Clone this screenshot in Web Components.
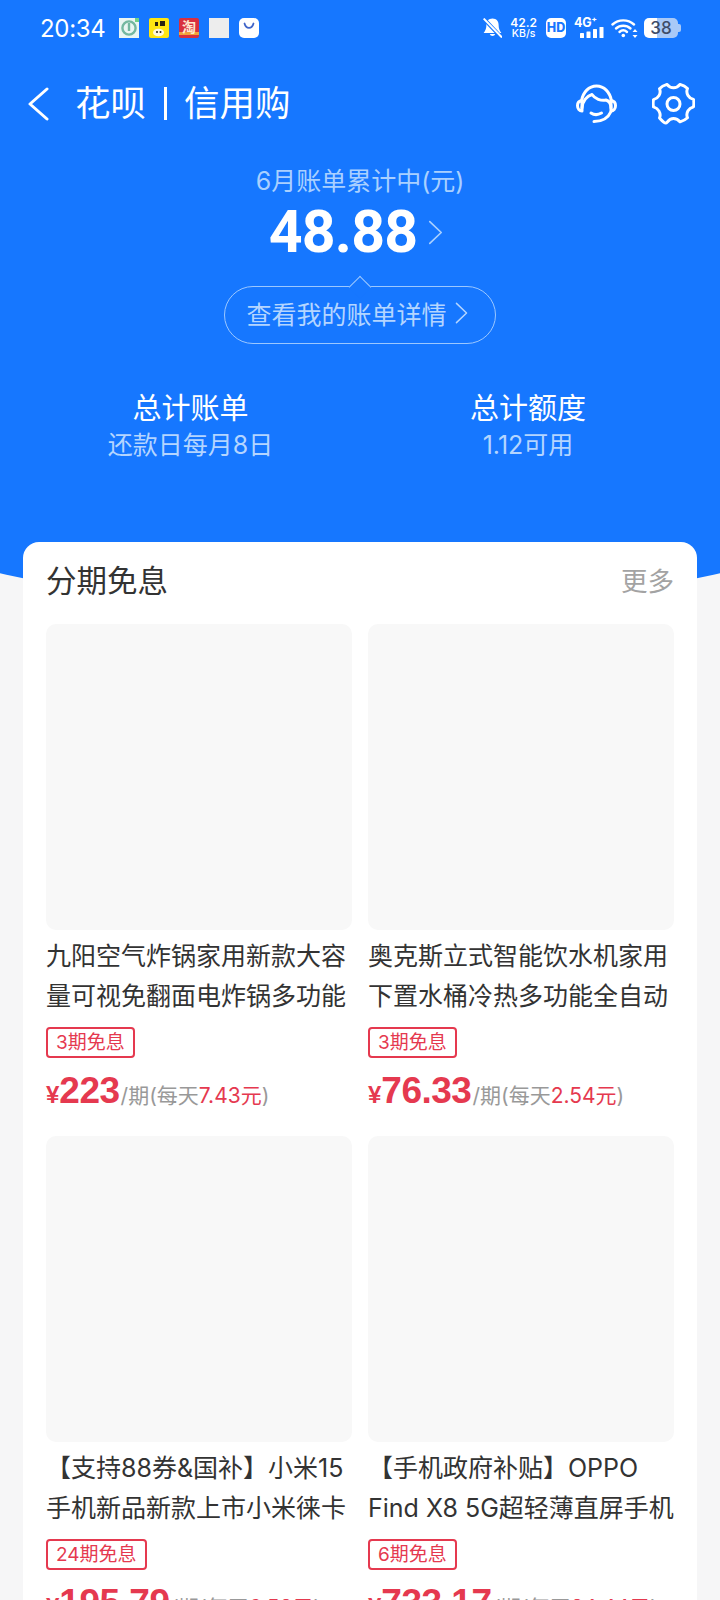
<!DOCTYPE html>
<html lang="zh">
<head>
<meta charset="utf-8">
<title>花呗 | 信用购</title>
<style>
  html, body {
    margin: 0;
    height: 1600px;
    overflow: hidden;
    background: #f6f6f7;
    font-family: Inter, "Noto Sans CJK SC", sans-serif;
  }
</style>
</head>
<body>
<credit-page>
  <bill-hero slot="hero" month="6月账单累计中(元)" amount="48.88">
    <stat-item slot="stats" title="总计账单" note="还款日每月8日"></stat-item>
    <stat-item slot="stats" title="总计额度" note="1.12可用"></stat-item>
  </bill-hero>
  <section-card title="分期免息" more="更多">
    <product-card tag="3期免息" price="223" daily="7.43">九阳空气炸锅家用新款大容量可视免翻面电炸锅多功能</product-card>
    <product-card tag="3期免息" price="76.33" daily="2.54">奥克斯立式智能饮水机家用下置水桶冷热多功能全自动</product-card>
    <product-card tag="24期免息" price="195.79" daily="6.53">【支持88券&amp;国补】小米15手机新品新款上市小米徕卡</product-card>
    <product-card tag="6期免息" price="733.17" daily="24.44">【手机政府补贴】OPPO Find X8 5G超轻薄直屏手机</product-card>
  </section-card>
</credit-page>
<home-indicator></home-indicator>

<script>
const CHEVRON = /* html */ `<svg viewBox="0 0 14 24" fill="none" stroke="currentColor" stroke-width="1.6" stroke-linecap="round" stroke-linejoin="round"><path d="M1.5 1.5 12.5 12 1.5 22.5"/></svg>`;

class statusBar extends HTMLElement {
  connectedCallback() {
    this.attachShadow({ mode: "open" }).innerHTML = /* html */ `
      <style>
        :host { display: flex; align-items: center; height: 56px; padding: 0 42px 0 40px; color: #fff; }
        .time { font-size: 24px; letter-spacing: -0.3px; width: 79px; }
        .apps { display: flex; gap: 10px; }
        .apps svg { width: 20px; height: 20px; display: block; }
        .sys { margin-left: auto; display: flex; align-items: center; }
        .speed { font-size: 12px; line-height: 11px; font-weight: 600; text-align: center; margin: 0 9px 0 8px; }
        .speed small { display: block; font-size: 10.5px; font-weight: 500; }
        .hd { width: 20px; height: 20px; background: #fff; border-radius: 5px; color: #1677ff; font-size: 12.5px; font-weight: 800; line-height: 20px; text-align: center; }
        .net { position: relative; width: 30px; height: 20px; margin: 0 7px 0 8px; }
        .net span { position: absolute; left: 0; top: -2px; font-size: 12.5px; font-weight: 700; line-height: 14px; letter-spacing: -0.3px; }
        .net svg { position: absolute; right: 0; bottom: 0; }
        .battery { position: relative; width: 34px; height: 20px; margin-left: 6px; border-radius: 5px; background: linear-gradient(90deg, #fff 0 38%, #a9c9f7 38%); color: #3e4c68; font-size: 17px; font-weight: 500; line-height: 21px; text-align: center; }
        .battery::after { content: ""; position: absolute; right: -2.5px; top: 6px; width: 2.5px; height: 8px; border-radius: 0 2px 2px 0; background: #a9c9f7; }
      </style>
      <span class="time">20:34</span>
      <div class="apps">
        <svg viewBox="0 0 20 20"><rect width="20" height="20" fill="#eaf6f2"/><circle cx="10" cy="10" r="6.6" fill="none" stroke="#74b8a0" stroke-width="2.4"/><path d="M10 5v8" stroke="#74b8a0" stroke-width="2.4"/><rect x="16" y="0" width="4" height="4" fill="#6fd08a"/></svg>
        <svg viewBox="0 0 20 20"><rect width="20" height="20" rx="2" fill="#ffe612"/><path d="M6 4h3v4H6zM11 3h5v5h-5z" fill="#2b2410"/><ellipse cx="9.500" cy="14.500" rx="5.500" ry="3.800" fill="#fff8dc"/><circle cx="8" cy="14" r="1" fill="#2b2410"/><circle cx="11.500" cy="14" r="1" fill="#2b2410"/></svg>
        <svg viewBox="0 0 20 20"><rect width="20" height="20" rx="2" fill="#d8303f"/><rect y="14" width="20" height="3" fill="#f1a23c"/><text x="10" y="14" font-size="14" font-weight="700" text-anchor="middle" fill="#ffe9cf" font-family="Noto Sans CJK SC, sans-serif">淘</text></svg>
        <svg viewBox="0 0 20 20"><rect width="20" height="20" fill="#ededed"/></svg>
        <svg viewBox="0 0 20 20"><rect width="20" height="20" rx="5" fill="#fff"/><path d="M5.500 5.500c.8 3 2.500 4.300 4.500 4.300s3.700-1.300 4.500-4.300" fill="none" stroke="#3f64c8" stroke-width="1.800" stroke-linecap="round"/></svg>
      </div>
      <div class="sys">
        <svg width="19" height="20" viewBox="1 1 17 18"><path d="M9.500 1.500c-3.500 0-5.500 2.500-5.500 5.500 0 3.400-.8 5-2.500 7.500h16c-1.700-2.500-2.500-4.100-2.500-7.500 0-3-2-5.500-5.500-5.500z" fill="#fff"/><path d="M7 15.500a2.700 2.700 0 0 0 5 0z" fill="#fff"/><path d="M1 1l17 18" stroke="#1677ff" stroke-width="3.500"/><path d="M1.500 1.500l16.500 17" stroke="#fff" stroke-width="1.800"/></svg>
        <div class="speed">42.2<small>KB/s</small></div>
        <div class="hd">HD</div>
        <div class="net"><span>4G⁺</span>
          <svg width="24" height="11" viewBox="0 0 24 11" fill="#fff"><rect x="0" y="6" width="4" height="5" rx=".6"/><rect x="6.500" y="4.500" width="4" height="6.500" rx=".6"/><rect x="13" y="2" width="4" height="9" rx=".6"/><rect x="19.500" y="0" width="4" height="11" rx=".6"/></svg>
        </div>
        <svg width="27" height="20" viewBox="0 0 27 20" fill="none" stroke="#fff" stroke-width="2.4" stroke-linecap="round"><path d="M1.500 6.500C7.500 1 17 1 23 6.500"/><path d="M5 10.500c4-3.700 10.500-3.700 14.500 0"/><path d="M8.500 14c2.300-2 5.200-2 7.500 0"/><circle cx="12.300" cy="17.500" r="1.800" fill="#fff" stroke="none"/><path d="M24 11l2.500 3h-5zM24 20l-2.500-3h5z" fill="#fff" stroke="none"/></svg>
        <div class="battery">38</div>
      </div>`;
  }
}

class navBar extends HTMLElement {
  connectedCallback() {
    this.attachShadow({ mode: "open" }).innerHTML = /* html */ `
      <style>
        :host { display: flex; align-items: center; height: 89px; padding: 3px 25px 0 27px; color: #fff; }
        .back { width: 22px; height: 34px; display: block; margin-right: 26px; }
        .title { font-size: 35.5px; line-height: 40px; display: flex; align-items: center; }
        .title i { width: 3px; height: 33px; background: #fff; margin: 0 17px 0 18px; }
        .actions { margin-left: auto; display: flex; align-items: center; gap: 35px; }
        .actions svg { display: block; }
      </style>
      <svg class="back" viewBox="0 0 22 34" fill="none" stroke="#fff" stroke-width="3" stroke-linecap="round" stroke-linejoin="round"><path d="M20 2 3 17l17 15"/></svg>
      <div class="title">花呗<i></i>信用购</div>
      <div class="actions">
        <svg width="41" height="40" viewBox="0 0 41 40" fill="none" stroke="#fff" stroke-width="3" stroke-linecap="round" stroke-linejoin="round">
          <path d="M5.500 17C7 8 13 2 20.500 2S34 8 35.500 17"/>
          <path d="M6 16.500c-3.500.5-4.500 3-4.500 5 0 3.500 2 5.500 4.500 5.500z"/>
          <path d="M35 16.500c3.500.5 4.500 3 4.500 5 0 3.500-2 5.500-4.500 5.500z"/>
          <path d="M6 24c.5-7 5-12 10-13.500 3 4.500 9 6.500 14 5.500 3 1 5 4 5 8"/>
          <path d="M15 29c3 2 7 2 10.500 0"/>
          <path d="M18 37.500c7.500 0 14-3 17-10"/>
        </svg>
        <svg width="43" height="42" viewBox="0 0 43 42" fill="none" stroke="#fff" stroke-width="3" stroke-linejoin="round">
          <path d="M15 2.500c2 2.700 4 3.500 6.500 3.500S26 5.200 28 2.500c2.300.7 6 2.800 7.500 4.300-1.300 3-.7 5 .5 7.200s3 3.500 5.500 4.200c.5 2.400.5 5.200 0 7.600-2.500.7-4.300 2-5.500 4.200s-1.800 4.200-.5 7.200c-1.500 1.500-5.200 3.600-7.500 4.300-2-2.700-4-3.500-6.500-3.500S17 39.300 15 42 9 38.900 7.500 37.500C8.800 34.500 8.200 32.500 7 30.300S4 26.800 1.500 26c-.5-2.400-.5-5.200 0-7.600 2.500-.7 4.300-2 5.500-4.200s1.800-4.200.5-7.200C9 5.300 12.700 3.200 15 2.500z" transform="translate(0 -1) scale(1 .96)"/>
          <circle cx="21.500" cy="21" r="6.500"/>
        </svg>
      </div>`;
  }
}

class statItem extends HTMLElement {
  connectedCallback() {
    this.attachShadow({ mode: "open" }).innerHTML = /* html */ `
      <style>
        :host { display: block; text-align: center; color: #fff; }
        .t { font-size: 29px; line-height: 38px; }
        .n { font-size: 25px; line-height: 35px; color: #b4d5ff; }
      </style>
      <div class="t">${this.getAttribute("title")}</div>
      <div class="n">${this.getAttribute("note")}</div>`;
  }
}

class billHero extends HTMLElement {
  connectedCallback() {
    this.attachShadow({ mode: "open" }).innerHTML = /* html */ `
      <style>
        :host { display: block; position: relative; height: 542px; background: #1677ff; }
        /* curved bottom edge, runs on behind the white card */
        :host::after { content: ""; position: absolute; left: -140px; width: 1000px; top: 497px; height: 110px; border-radius: 0 0 50% 50% / 0 0 100% 100%; background: #1677ff; }
        .wrap { position: relative; z-index: 1; }
        .sum { display: flex; flex-direction: column; align-items: center; padding-top: 17px; }
        .month { font-size: 25px; line-height: 32px; color: #a9d0ff; }
        .amount { display: flex; align-items: center; height: 68px; margin: 1px 8px 0 0; color: #fff; font: 700 59px/68px Roboto, Inter, sans-serif; letter-spacing: -0.8px; }
        .amount svg { width: 15px; height: 25px; margin-left: 11px; color: #a9d0ff; }
        .detail { position: relative; display: flex; align-items: center; justify-content: center; gap: 8px; box-sizing: border-box; width: 272px; height: 58px; margin-top: 20px; padding: 0 6px 4px 0; border: 1px solid #9cc8ff; border-radius: 29px; font-size: 25px; color: #b4d5ff; }
        .detail svg { width: 13px; height: 22px; }
        /* small notch pointing at the amount */
        .detail::before { content: ""; position: absolute; left: 50%; top: -8px; width: 15px; height: 15px; margin-left: -8px; background: #1677ff; border: solid #9cc8ff; border-width: 1px 0 0 1px; transform: rotate(45deg); }
        .stats { display: grid; grid-template-columns: 337px 338px; padding: 46px 0 0 22px; }
      </style>
      <div class="wrap">
        <status-bar></status-bar>
        <nav-bar></nav-bar>
        <div class="sum">
          <div class="month">${this.getAttribute("month")}</div>
          <div class="amount">${this.getAttribute("amount")}${CHEVRON}</div>
          <div class="detail">查看我的账单详情${CHEVRON}</div>
        </div>
        <div class="stats"><slot name="stats"></slot></div>
      </div>`;
  }
}

class sectionCard extends HTMLElement {
  connectedCallback() {
    this.attachShadow({ mode: "open" }).innerHTML = /* html */ `
      <style>
        :host { display: block; position: relative; z-index: 2; margin: 0 23px; padding: 0 23px; background: #fff; border-radius: 16px 16px 0 0; height: 1200px; }
        header { display: flex; justify-content: space-between; align-items: center; height: 74px; margin-bottom: 8px; }
        h2 { margin: 0; font-size: 30.5px; font-weight: 400; color: #333; }
        a { font-size: 26.5px; color: #a3a3a3; }
        .grid { display: grid; grid-template-columns: 306px 306px; column-gap: 16px; row-gap: 22px; }
      </style>
      <header><h2>${this.getAttribute("title")}</h2><a>${this.getAttribute("more")}</a></header>
      <div class="grid"><slot></slot></div>`;
  }
}

class productCard extends HTMLElement {
  connectedCallback() {
    this.attachShadow({ mode: "open" }).innerHTML = /* html */ `
      <style>
        :host { display: block; height: 490px; }
        .pic { height: 306px; border-radius: 10px; background: #f8f8f8; }
        .name { height: 80px; margin-top: 6px; font-size: 25px; line-height: 40px; color: #333; overflow: hidden; }
        .tag { display: inline-block; box-sizing: border-box; height: 31px; margin-top: 11px; padding: 0 8px; border: 2px solid #e5394f; border-radius: 4px; font-size: 19px; line-height: 27px; color: #e5394f; vertical-align: top; }
        .price { display: flex; align-items: baseline; height: 41px; margin-top: 12px; color: #999; font-size: 21px; white-space: nowrap; }
        .price b { color: #e5394f; font-family: "Liberation Sans", Inter, sans-serif; font-weight: 700; }
        .cur { font-size: 24px; }
        .val { font-size: 37px; letter-spacing: -0.5px; margin-right: 1px; }
        em { font-style: normal; color: #e5394f; }
      </style>
      <div class="pic"></div>
      <div class="name"><slot></slot></div>
      <div class="tag">${this.getAttribute("tag")}</div>
      <div class="price"><b class="cur">¥</b><b class="val">${this.getAttribute("price")}</b>/期(每天<em>${this.getAttribute("daily")}元</em>)</div>`;
  }
}

class homeIndicator extends HTMLElement {
  connectedCallback() {
    this.attachShadow({ mode: "open" }).innerHTML = /* html */ `
      <style>
        :host { position: fixed; left: 217px; top: 1593px; width: 288px; height: 7px; background: rgba(0, 0, 0, 0.27); }
      </style>`;
  }
}

class creditPage extends HTMLElement {
  connectedCallback() {
    this.attachShadow({ mode: "open" }).innerHTML = /* html */ `
      <style>
        :host { display: block; position: relative; overflow: hidden; height: 1600px; }
      </style>
      <slot name="hero"></slot>
      <slot></slot>`;
  }
}

customElements.define("status-bar", statusBar);
customElements.define("nav-bar", navBar);
customElements.define("stat-item", statItem);
customElements.define("bill-hero", billHero);
customElements.define("section-card", sectionCard);
customElements.define("product-card", productCard);
customElements.define("home-indicator", homeIndicator);
customElements.define("credit-page", creditPage);
</script>
</body>
</html>
